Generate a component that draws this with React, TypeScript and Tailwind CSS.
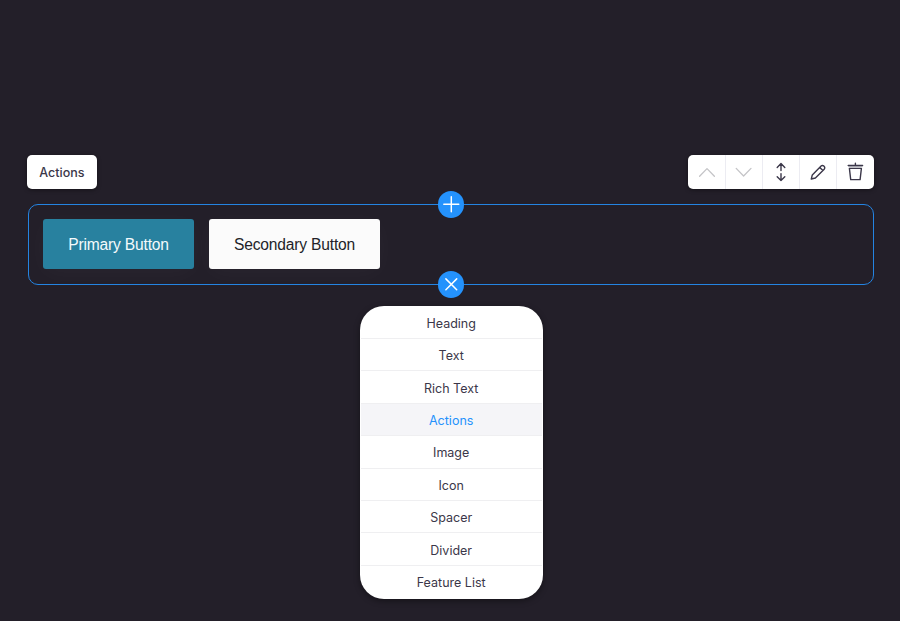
import React from 'react';

const menuItems = ['Heading', 'Text', 'Rich Text', 'Actions', 'Image', 'Icon', 'Spacer', 'Divider', 'Feature List'];

const tools: { name: string; muted?: boolean; icon: React.ReactNode }[] = [
  { name: 'Move up', muted: true, icon: <path d="M2.6 14.2 10 6.6l7.4 7.6" /> },
  { name: 'Move down', muted: true, icon: <path d="M2.2 6.4 9.6 14l7.4-7.6" /> },
  {
    name: 'Resize',
    icon: <path d="M10 8.6V1.8M6.2 5.4 10 1.6l3.8 3.8M10 11.6v7M6.2 14.8l3.8 3.8 3.8-3.8" />,
  },
  {
    name: 'Edit',
    icon: (
      <path d="M3.3 17 4.3 12.9 13.1 4.1a1.9 1.9 0 0 1 2.7 0l.4.4a1.9 1.9 0 0 1 0 2.7L7.4 16 3.3 17ZM11.8 5.4l3.1 3.1" />
    ),
  },
  {
    name: 'Delete',
    icon: (
      <>
        <path d="M3.8 4.7h13.2" stroke="#c9c9cf" strokeWidth="1.2" />
        <path d="M3.2 3.5h14.4M10.4 1.2v2.3M4.4 6.4h12l-1.3 11.2H5.7L4.4 6.4Z" />
      </>
    ),
  },
];

function InsertButton({ open = false }: { open?: boolean }) {
  return (
    <button
      aria-label={open ? 'Close menu' : 'Add block'}
      className="flex size-[26.6px] items-center justify-center rounded-full bg-[#2492fc]"
    >
      <svg viewBox="0 0 27 27" className="size-[26.6px]" fill="none" stroke="#fff" strokeWidth="1.5" strokeLinecap="round">
        <path d={open ? 'M8 8l11 11M19 8 8 19' : 'M13.5 5.9v15.2M5.9 13.5h15.2'} />
      </svg>
    </button>
  );
}

export default function App() {
  return (
    <main className="h-[621px] w-[900px] overflow-hidden bg-[#231f29] pt-[154.7px] font-['Inter',sans-serif] text-[#3b3749]">
      <header className="flex h-[34.3px] justify-between pr-[26px] pl-[27px]">
        <div className="flex w-[69.7px] items-center justify-center rounded-[5px] bg-white pt-[3px] text-[12.5px] font-medium shadow-[0_1px_4px_#0006]">
          Actions
        </div>
        <div className="flex w-[186.2px] divide-x divide-[#ececf2] overflow-hidden rounded-[5px] bg-white pr-[0.6px] pl-[0.8px] shadow-[0_1px_4px_#0006]">
          {tools.map((tool) => (
            <button key={tool.name} aria-label={tool.name} className="flex flex-1 items-center justify-center">
              <svg
                viewBox="0 0 20 20"
                className="size-5"
                fill="none"
                stroke={tool.muted ? '#c4c4c7' : '#3b3749'}
                strokeWidth={tool.muted ? 1.3 : 1.4}
                strokeLinecap="round"
                strokeLinejoin="round"
              >
                {tool.icon}
              </svg>
            </button>
          ))}
        </div>
      </header>

      <section className="relative mt-[15px] ml-[28px] flex h-[81px] w-[846px] gap-[15px] rounded-[10px] border border-[#2484e2] pt-[14.5px] pl-[14px] font-['Liberation_Sans',sans-serif] text-[15.6px] tracking-[-0.18px]">
        <button className="h-[50px] w-[151px] rounded-[3px] bg-[#28819f] text-[#f4fafc] shadow-[0_4px_24px_#ffffff08]">
          Primary Button
        </button>
        <button className="h-[50px] w-[171px] rounded-[3px] bg-[#fbfbfb] text-[#231f29] shadow-[0_4px_24px_#ffffff08]">
          Secondary Button
        </button>
        <div className="absolute -top-[13.8px] left-[408.6px]">
          <InsertButton />
        </div>
        <div className="absolute -bottom-[13.8px] left-[408.6px]">
          <InsertButton open />
        </div>
      </section>

      <ul className="mt-[20.6px] ml-[359.7px] w-[183px] overflow-hidden rounded-[24px] bg-white px-px py-[1px] text-[12.5px] shadow-[0_2px_6px_#0006]">
        {menuItems.map((item) => (
          <li
            key={item}
            className={`flex h-[32.4px] items-center justify-center border-b border-[#efeff1] pt-[3.8px] last:border-b-0 last:pt-[2.4px] ${
              item === 'Actions' ? 'bg-[#f5f5f8] text-[#2492fc]' : ''
            }`}
          >
            {item}
          </li>
        ))}
      </ul>
    </main>
  );
}
